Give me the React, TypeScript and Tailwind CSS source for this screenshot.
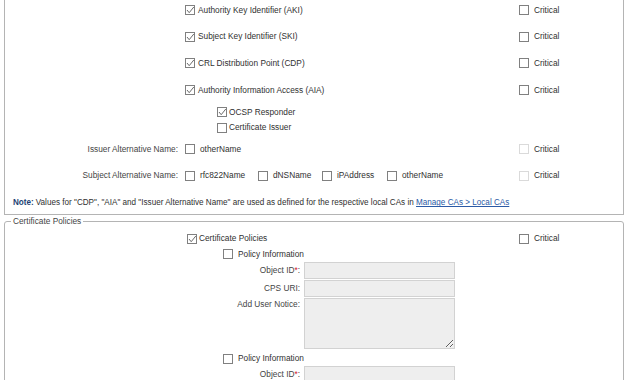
import React from 'react';

type BoxProps = { checked?: boolean; disabled?: boolean };

const Box: React.FC<BoxProps> = ({ checked, disabled }) => (
  <span
    className={`relative inline-block h-[10px] w-[10px] shrink-0 border bg-white ${
      disabled ? 'border-[#dadada]' : 'border-[#808080]'
    }`}
  >
    {checked && (
      <svg viewBox="0 0 8 8" className="absolute left-0 top-0 h-[8px] w-[8px]">
        <path d="M1 4 L3.2 6.7 L7.8 1" stroke="#5a5a5a" strokeWidth="0.9" fill="none" />
      </svg>
    )}
  </span>
);

type CheckProps = BoxProps & { label: string; className?: string };

const Check: React.FC<CheckProps> = ({ checked, disabled, label, className = 'gap-[3px]' }) => (
  <span className={`flex items-center whitespace-nowrap ${className}`}>
    <Box checked={checked} disabled={disabled} />
    <span>{label}</span>
  </span>
);

// one row of the extensions panel: label | options | critical
const Row: React.FC<{
  h: string;
  label?: string;
  critical?: 'on' | 'off';
  children?: React.ReactNode;
}> = ({ h, label, critical, children }) => (
  <div className={`flex items-center ${h}`}>
    <div className="w-[179px] pr-[6px] text-right text-[#444]">{label}</div>
    <div className="flex w-[334px] items-center pl-[1px]">{children}</div>
    <div className="pl-[1px]">
      {critical && <Check label="Critical" disabled={critical === 'off'} className="gap-[5px]" />}
    </div>
  </div>
);

const Field: React.FC<{ label: string; required?: boolean }> = ({ label, required }) => (
  <div className="flex h-[18px] items-start">
    <div className="w-[295px] text-right leading-[17px] text-[#444]">
      {label}
      {required && <span className="text-[#d0202a]">*</span>}:
    </div>
    <input
      readOnly
      className="ml-[4px] h-[17px] w-[151px] border border-[#d2d2d2] bg-[#eeeeee] outline-none"
    />
  </div>
);

export default function App() {
  return (
    <div
      className="h-[380px] w-[630px] overflow-hidden bg-white text-[8.3px] text-[#303030]"
      style={{ fontFamily: '"Liberation Sans", Arial, sans-serif' }}
    >
      <div className="ml-[4px] w-[620px] border-x border-b border-[#b4b4b4]">
        <div className="-mt-[3px]">
          <Row h="h-[26px]" critical="on">
            <Check checked label="Authority Key Identifier (AKI)" />
          </Row>
          <Row h="h-[27px]" critical="on">
            <Check checked label="Subject Key Identifier (SKI)" />
          </Row>
          <Row h="h-[26px]" critical="on">
            <Check checked label="CRL Distribution Point (CDP)" />
          </Row>
          <Row h="h-[28px]" critical="on">
            <Check checked label="Authority Information Access (AIA)" />
          </Row>
          <Row h="h-[16px]">
            <div className="pl-[32px]">
              <Check checked label="OCSP Responder" className="gap-[2px]" />
            </div>
          </Row>
          <Row h="h-[15px]">
            <div className="pl-[32px]">
              <Check label="Certificate Issuer" className="gap-[2px]" />
            </div>
          </Row>
          <Row h="h-[28px]" label="Issuer Alternative Name:" critical="off">
            <Check label="otherName" className="gap-[5px]" />
          </Row>
          <Row h="h-[25px]" label="Subject Alternative Name:" critical="off">
            <div className="w-[73px]">
              <Check label="rfc822Name" className="gap-[5px]" />
            </div>
            <div className="w-[64px]">
              <Check label="dNSName" className="gap-[5px]" />
            </div>
            <div className="w-[65px]">
              <Check label="iPAddress" className="gap-[5px]" />
            </div>
            <Check label="otherName" className="gap-[5px]" />
          </Row>
          <div className="flex h-[26px] items-center whitespace-nowrap pl-[8px] pt-[5px] text-[8.15px]">
            <span className="font-bold text-[#1d3f73]">Note:</span>
            <span className="ml-[2px]">
              Values for "CDP", "AIA" and "Issuer Alternative Name" are used as defined for the
              respective local CAs in{' '}
              <a className="text-[#2b5aa6] underline">Manage CAs &gt; Local CAs</a>
            </span>
          </div>
        </div>
      </div>

      <fieldset className="ml-[4px] mt-[1px] w-[620px] rounded-[3px] border border-[#b4b4b4]">
        <legend className="ml-[6px] px-[2px] leading-[10px] text-[#444]">Certificate Policies</legend>
        <div className="pt-[5px]">
          <div className="flex h-[15px] items-center">
            <div className="w-[514px] pl-[182px]">
              <Check checked label="Certificate Policies" className="gap-[2px]" />
            </div>
            <Check label="Critical" className="gap-[5px]" />
          </div>
          <div className="flex h-[16px] items-center pl-[218px]">
            <Check label="Policy Information" className="gap-[5px]" />
          </div>
          <Field label="Object ID" required />
          <Field label="CPS URI" />
          <div className="flex h-[53px] items-start">
            <div className="w-[295px] pt-[1px] text-right leading-[10px] text-[#444]">Add User Notice:</div>
            <textarea
              readOnly
              className="ml-[4px] h-[51px] w-[151px] border border-[#d2d2d2] bg-[#eeeeee] outline-none"
            />
          </div>
          <div className="flex h-[15px] items-center pl-[218px]">
            <Check label="Policy Information" className="gap-[5px]" />
          </div>
          <Field label="Object ID" required />
          <Field label="CPS URI" />
        </div>
      </fieldset>
    </div>
  );
}
